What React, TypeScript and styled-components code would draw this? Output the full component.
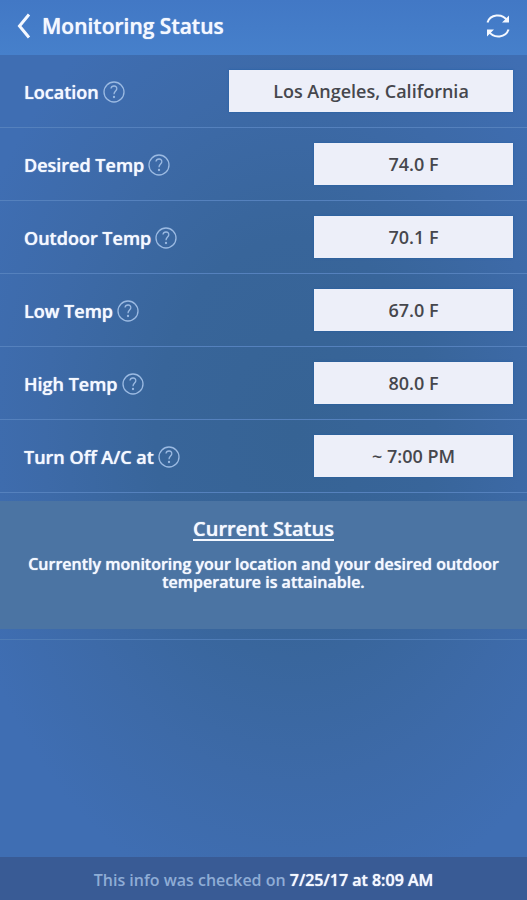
import React from "react";
import styled, { createGlobalStyle } from "styled-components";

const GlobalStyle = createGlobalStyle`
  *, *::before, *::after { box-sizing: border-box; }
  body {
    margin: 0;
    background: #4070b4;
    font-family: "Open Sans", "Noto Sans", sans-serif;
    font-weight: 600;
    color: #f4f8ff;
  }
  button, input { font: inherit; }
`;

const Screen = styled.div`
  display: flex;
  flex-direction: column;
  min-height: 100vh;
  background: radial-gradient(ellipse 66% 54% at 56% 48%, #366394 0%, #38659a 40%, #3d6aa8 72%, #3f6eb3 100%);
`;

const Header = styled.header`
  display: flex;
  align-items: center;
  justify-content: space-between;
  height: 55px;
  padding: 0 16px 3px;
  background: linear-gradient(#4278c5, #4680cb);
`;

const Heading = styled.div`
  display: flex;
  align-items: center;
  gap: 10px;
`;

const Title = styled.h1`
  margin: 0;
  font-size: 21px;
  line-height: 28px;
  font-weight: 600;
  text-shadow: 0 0 1px #f4f8ff;
`;

const IconButton = styled.button`
  display: flex;
  padding: 0;
  border: 0;
  background: none;
  color: ${({ $muted }: { $muted?: boolean }) => ($muted ? "#9bbae2" : "#f4f8ff")};
  cursor: pointer;
`;

const Row = styled.div`
  display: flex;
  align-items: center;
  justify-content: space-between;
  gap: 16px;
  height: 73px;
  padding: 0 14px 0 24px;
  border-bottom: 1px solid #5581bd;
`;

const LabelGroup = styled.div`
  display: flex;
  align-items: center;
  gap: 4px;
  padding-top: 2px;
`;

const Label = styled.label`
  font-size: 18px;
  line-height: 24px;
  white-space: nowrap;
  text-shadow: 0 0 1px #f4f8ff;
`;

const Value = styled.input<{ $wide?: boolean }>`
  flex: 0 1 ${({ $wide }) => ($wide ? "284px" : "199px")};
  min-width: 0;
  height: 42px;
  padding: 0 8px;
  border: 0;
  border-radius: 0;
  outline-offset: 2px;
  background: #edeff9;
  color: #46474d;
  font-size: 18px;
  text-align: center;
  box-shadow: 0 0 2px #1f5fa5;
`;

const StatusSection = styled.section`
  padding: 8px 0 10px;
  border-bottom: 1px solid #4f7cb6;
`;

const StatusPanel = styled.div`
  min-height: 128px;
  padding: 14px 24px;
  background: #4b74a3;
  text-align: center;
`;

const StatusTitle = styled.h2`
  margin: 0 0 12px;
  font-size: 20px;
  line-height: 28px;
  font-weight: 600;
  text-decoration: underline;
  text-decoration-thickness: 2px;
  text-underline-offset: 3px;
  text-shadow: 0 0 1px #f4f8ff;
`;

const StatusText = styled.p`
  margin: 0;
  font-size: 16px;
  line-height: 18px;
  text-shadow: 0 0 1px #f4f8ff;
`;

const Footer = styled.footer`
  margin-top: auto;
  padding: 13px 16px 10px;
  background: #395b95;
  color: #8fadd6;
  font-size: 16px;
  line-height: 20px;
  text-align: center;
`;

const CheckedAt = styled.time`
  color: #f4f8ff;
  text-shadow: 0 0 1px #f4f8ff;
`;

const BackIcon = () => (
  <svg width="16" height="28" viewBox="0 0 16 28" fill="none" stroke="currentColor" strokeWidth="3" aria-hidden="true">
    <path d="M13 2.5 3.5 14 13 25.5" />
  </svg>
);

const RefreshIcon = () => (
  <svg width="26" height="26" viewBox="0 0 26 26" fill="none" stroke="currentColor" strokeWidth="2" aria-hidden="true">
    <path d="M2.5 9.5C5 1.5 17 -.5 22.5 8" />
    <path d="M23.5 16.5C21 24.5 9 26.5 3.5 18" />
    <path d="M24 2.5V9.5H17ZM2 23.5V16.5H9Z" fill="currentColor" stroke="none" />
  </svg>
);

const HelpIcon = () => (
  <svg width="22" height="22" viewBox="0 0 22 22" fill="none" stroke="currentColor" strokeWidth="1.3" aria-hidden="true">
    <circle cx="11" cy="11" r="10" />
    <path d="M8 7.5C8.5 4 14.2 4.2 13.8 7.9C13.6 10 11 10.4 11 13.3" />
    <circle cx="11" cy="16" r=".5" fill="currentColor" />
  </svg>
);

interface Reading {
  id: string;
  label: string;
  value: string;
  wide?: boolean;
}

const readings: Reading[] = [
  { id: "location", label: "Location", value: "Los Angeles, California", wide: true },
  { id: "desired", label: "Desired Temp", value: "74.0 F" },
  { id: "outdoor", label: "Outdoor Temp", value: "70.1 F" },
  { id: "low", label: "Low Temp", value: "67.0 F" },
  { id: "high", label: "High Temp", value: "80.0 F" },
  { id: "turn-off", label: "Turn Off A/C at", value: "~ 7:00 PM" },
];

const ReadingRow = ({ id, label, value, wide }: Reading) => (
  <Row>
    <LabelGroup>
      <Label htmlFor={id}>{label}</Label>
      <IconButton $muted type="button" aria-label={`About ${label}`}>
        <HelpIcon />
      </IconButton>
    </LabelGroup>
    <Value id={id} $wide={wide} defaultValue={value} readOnly />
  </Row>
);

export default function App() {
  return (
    <Screen>
      <GlobalStyle />
      <Header>
        <Heading>
          <IconButton type="button" aria-label="Back">
            <BackIcon />
          </IconButton>
          <Title>Monitoring Status</Title>
        </Heading>
        <IconButton type="button" aria-label="Refresh">
          <RefreshIcon />
        </IconButton>
      </Header>
      <main>
        {readings.map((reading) => (
          <ReadingRow key={reading.id} {...reading} />
        ))}
        <StatusSection>
          <StatusPanel>
            <StatusTitle>Current Status</StatusTitle>
            <StatusText>
              Currently monitoring your location and your desired outdoor temperature is attainable.
            </StatusText>
          </StatusPanel>
        </StatusSection>
      </main>
      <Footer>
        This info was checked on <CheckedAt dateTime="2017-07-25T08:09">7/25/17 at 8:09 AM</CheckedAt>
      </Footer>
    </Screen>
  );
}
